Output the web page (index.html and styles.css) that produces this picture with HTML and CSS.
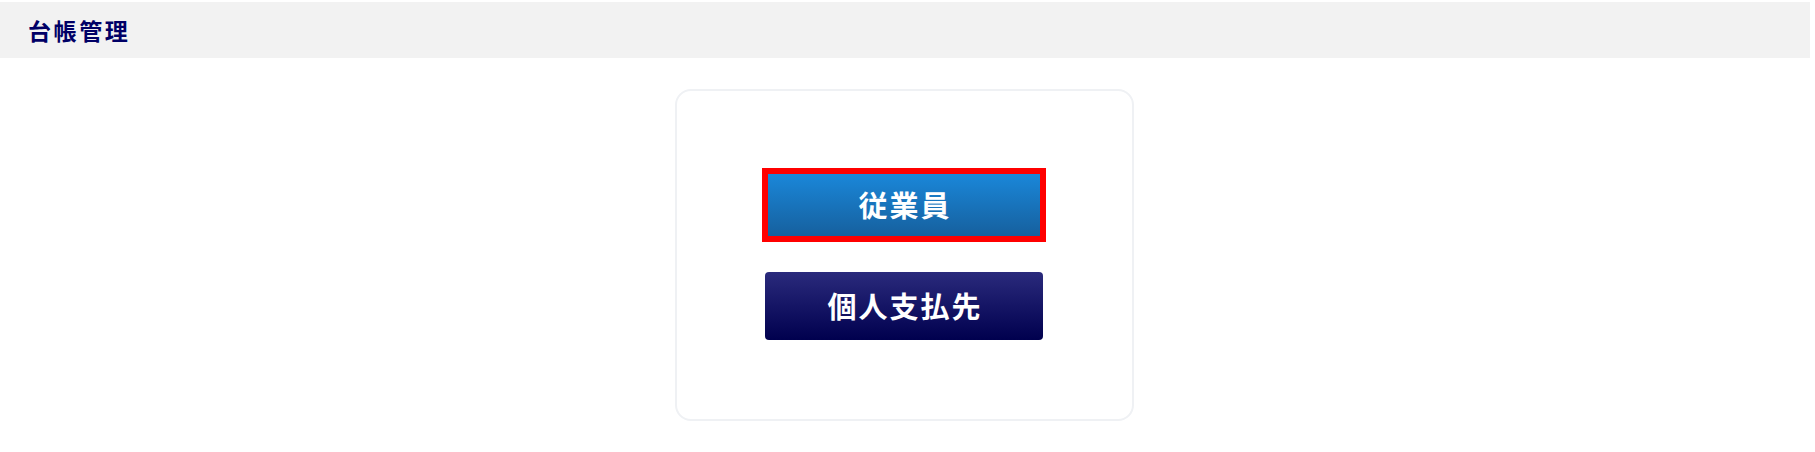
FILE: index.html
```html
<!DOCTYPE html>
<html lang="ja">
<head>
<meta charset="utf-8">
<title>台帳管理</title>
<link rel="stylesheet" href="styles.css">
</head>
<body>
<div class="page">
  <header class="page-header">
    <h1 class="page-title">台帳管理</h1>
  </header>
  <main class="content">
    <section class="card">
      <button class="menu-btn menu-btn--employee is-focused" type="button">従業員</button>
      <button class="menu-btn menu-btn--payee" type="button">個人支払先</button>
    </section>
  </main>
</div>
</body>
</html>
```

FILE: styles.css
```css
* { box-sizing: border-box; }
html, body { margin: 0; padding: 0; background: #ffffff; }
body {
  font-family: "Noto Sans CJK JP", "Noto Sans", sans-serif;
}
.page {
  width: 1808px;
  padding-top: 2px;
}
.page-header {
  height: 56px;
  background: #f2f2f2;
  display: flex;
  align-items: center;
  padding-left: 28px;
  margin-right: -2px;
}
.page-title {
  margin: 0;
  font-size: 23px;
  font-weight: 700;
  letter-spacing: 2.6px;
  color: #000066;
  line-height: 1;
}
.content {
  display: flex;
  justify-content: center;
  padding-top: 31px;
}
.card {
  width: 459px;
  height: 332px;
  border: 2px solid #eff1f4;
  border-radius: 16px;
  background: #ffffff;
  display: flex;
  flex-direction: column;
  align-items: center;
  justify-content: center;
  gap: 33px;
}
.menu-btn {
  width: 278px;
  height: 68px;
  border: none;
  border-radius: 4px;
  color: #ffffff;
  font-family: "Noto Sans CJK JP", sans-serif;
  font-size: 29px;
  font-weight: 700;
  letter-spacing: 2px;
  line-height: 1;
  display: flex;
  align-items: center;
  justify-content: center;
  padding: 0 0 0 2px;
  cursor: pointer;
}
.menu-btn--employee {
  background: linear-gradient(to bottom, #1a87d9, #16609e);
}
.menu-btn--payee {
  background: linear-gradient(to bottom, #2a2a7c, #00004e);
}
.is-focused {
  border: 3px solid #ff0000;
  border-radius: 0;
  outline: 3px solid #ff0000;
}
```
